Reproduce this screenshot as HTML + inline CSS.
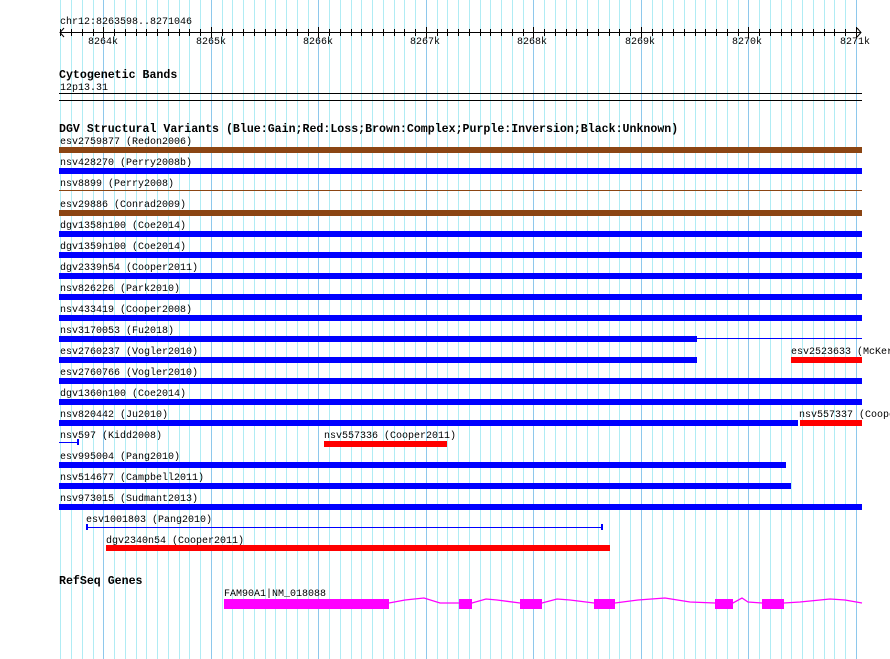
<!DOCTYPE html>
<html><head><meta charset="utf-8"><style>
html,body{margin:0;padding:0;background:#fff;}
svg{display:block;}
text{font-family:"Liberation Mono","DejaVu Sans Mono",monospace;font-size:10px;fill:#000;}
.b{font-weight:bold;font-size:11.6px;}
</style></head><body>
<svg width="890" height="659" xmlns="http://www.w3.org/2000/svg">
<g shape-rendering="crispEdges" fill="none">
<path stroke="#b0ecf4" d="M60.5 0V659M71.5 0V659M82.5 0V659M93.5 0V659M114.5 0V659M125.5 0V659M136.5 0V659M146.5 0V659M157.5 0V659M168.5 0V659M179.5 0V659M189.5 0V659M200.5 0V659M222.5 0V659M232.5 0V659M243.5 0V659M254.5 0V659M265.5 0V659M275.5 0V659M286.5 0V659M297.5 0V659M308.5 0V659M329.5 0V659M340.5 0V659M351.5 0V659M361.5 0V659M372.5 0V659M383.5 0V659M394.5 0V659M404.5 0V659M415.5 0V659M437.5 0V659M447.5 0V659M458.5 0V659M469.5 0V659M480.5 0V659M490.5 0V659M501.5 0V659M512.5 0V659M523.5 0V659M544.5 0V659M555.5 0V659M566.5 0V659M576.5 0V659M587.5 0V659M598.5 0V659M609.5 0V659M619.5 0V659M630.5 0V659M652.5 0V659M662.5 0V659M673.5 0V659M684.5 0V659M695.5 0V659M705.5 0V659M716.5 0V659M727.5 0V659M738.5 0V659M759.5 0V659M770.5 0V659M781.5 0V659M791.5 0V659M802.5 0V659M813.5 0V659M824.5 0V659M834.5 0V659M845.5 0V659"/>
<path stroke="#8ec8ec" d="M103.5 0V659M211.5 0V659M318.5 0V659M426.5 0V659M533.5 0V659M641.5 0V659M748.5 0V659M856.5 0V659"/>
<path stroke="#000" d="M60.5 29V36M71.5 29V36M82.5 29V36M93.5 29V36M114.5 29V36M125.5 29V36M136.5 29V36M146.5 29V36M157.5 29V36M168.5 29V36M179.5 29V36M189.5 29V36M200.5 29V36M222.5 29V36M232.5 29V36M243.5 29V36M254.5 29V36M265.5 29V36M275.5 29V36M286.5 29V36M297.5 29V36M308.5 29V36M329.5 29V36M340.5 29V36M351.5 29V36M361.5 29V36M372.5 29V36M383.5 29V36M394.5 29V36M404.5 29V36M415.5 29V36M437.5 29V36M447.5 29V36M458.5 29V36M469.5 29V36M480.5 29V36M490.5 29V36M501.5 29V36M512.5 29V36M523.5 29V36M544.5 29V36M555.5 29V36M566.5 29V36M576.5 29V36M587.5 29V36M598.5 29V36M609.5 29V36M619.5 29V36M630.5 29V36M652.5 29V36M662.5 29V36M673.5 29V36M684.5 29V36M695.5 29V36M705.5 29V36M716.5 29V36M727.5 29V36M738.5 29V36M759.5 29V36M770.5 29V36M781.5 29V36M791.5 29V36M802.5 29V36M813.5 29V36M824.5 29V36M834.5 29V36M845.5 29V36M103.5 27V38M211.5 27V38M318.5 27V38M426.5 27V38M533.5 27V38M641.5 27V38M748.5 27V38M856.5 27V38"/>
<line x1="60" y1="32.5" x2="861" y2="32.5" stroke="#000"/>
<line x1="59" y1="93.5" x2="862" y2="93.5" stroke="#000"/>
<line x1="59" y1="100.5" x2="862" y2="100.5" stroke="#000"/>
</g>
<polyline points="64,28 60,32.5 64,37" fill="none" stroke="#000"/>
<polyline points="857,28 861,32.5 857,37" fill="none" stroke="#000"/>
<text x="60" y="24">chr12:8263598..8271046</text>
<text x="88" y="44">8264k</text><text x="196" y="44">8265k</text><text x="303" y="44">8266k</text>
<text x="410" y="44">8267k</text><text x="517" y="44">8268k</text><text x="625" y="44">8269k</text>
<text x="732" y="44">8270k</text><text x="840" y="44">8271k</text>
<text class="b" x="59" y="78">Cytogenetic Bands</text>
<text x="60" y="90">12p13.31</text>
<text class="b" x="59" y="132">DGV Structural Variants (Blue:Gain;Red:Loss;Brown:Complex;Purple:Inversion;Black:Unknown)</text>
<g shape-rendering="crispEdges">
<rect x="59" y="147" width="803" height="6" fill="#8b4513"/>
<rect x="59" y="168" width="803" height="6" fill="#0000ff"/>
<rect x="59" y="190" width="803" height="1" fill="#8b4513"/>
<rect x="59" y="210" width="803" height="6" fill="#8b4513"/>
<rect x="59" y="231" width="803" height="6" fill="#0000ff"/>
<rect x="59" y="252" width="803" height="6" fill="#0000ff"/>
<rect x="59" y="273" width="803" height="6" fill="#0000ff"/>
<rect x="59" y="294" width="803" height="6" fill="#0000ff"/>
<rect x="59" y="315" width="803" height="6" fill="#0000ff"/>
<rect x="59" y="336" width="638" height="6" fill="#0000ff"/>
<rect x="697" y="338" width="165" height="1" fill="#0000ff"/>
<rect x="59" y="357" width="638" height="6" fill="#0000ff"/>
<rect x="791" y="357" width="71" height="6" fill="#ff0000"/>
<rect x="59" y="378" width="803" height="6" fill="#0000ff"/>
<rect x="59" y="399" width="803" height="6" fill="#0000ff"/>
<rect x="59" y="420" width="739" height="6" fill="#0000ff"/>
<rect x="800" y="420" width="62" height="6" fill="#ff0000"/>
<rect x="59" y="442" width="19" height="1" fill="#0000ff"/>
<rect x="77" y="439" width="2" height="6" fill="#0000ff"/>
<rect x="324" y="441" width="123" height="6" fill="#ff0000"/>
<rect x="59" y="462" width="727" height="6" fill="#0000ff"/>
<rect x="59" y="483" width="732" height="6" fill="#0000ff"/>
<rect x="59" y="504" width="803" height="6" fill="#0000ff"/>
<rect x="87" y="527" width="515" height="1" fill="#0000ff"/>
<rect x="86" y="524" width="2" height="6" fill="#0000ff"/>
<rect x="601" y="524" width="2" height="6" fill="#0000ff"/>
<rect x="106" y="545" width="504" height="6" fill="#ff0000"/>
</g>
<text x="60" y="144">esv2759877 (Redon2006)</text>
<text x="60" y="165">nsv428270 (Perry2008b)</text>
<text x="60" y="186">nsv8899 (Perry2008)</text>
<text x="60" y="207">esv29886 (Conrad2009)</text>
<text x="60" y="228">dgv1358n100 (Coe2014)</text>
<text x="60" y="249">dgv1359n100 (Coe2014)</text>
<text x="60" y="270">dgv2339n54 (Cooper2011)</text>
<text x="60" y="291">nsv826226 (Park2010)</text>
<text x="60" y="312">nsv433419 (Cooper2008)</text>
<text x="60" y="333">nsv3170053 (Fu2018)</text>
<text x="60" y="354">esv2760237 (Vogler2010)</text>
<text x="791" y="354">esv2523633 (McKernan2009)</text>
<text x="60" y="375">esv2760766 (Vogler2010)</text>
<text x="60" y="396">dgv1360n100 (Coe2014)</text>
<text x="60" y="417">nsv820442 (Ju2010)</text>
<text x="799" y="417">nsv557337 (Cooper2011)</text>
<text x="60" y="438">nsv597 (Kidd2008)</text>
<text x="324" y="438">nsv557336 (Cooper2011)</text>
<text x="60" y="459">esv995004 (Pang2010)</text>
<text x="60" y="480">nsv514677 (Campbell2011)</text>
<text x="60" y="501">nsv973015 (Sudmant2013)</text>
<text x="86" y="522">esv1001803 (Pang2010)</text>
<text x="106" y="543">dgv2340n54 (Cooper2011)</text>
<text class="b" x="59" y="584">RefSeq Genes</text>
<text x="224" y="596">FAM90A1|NM_018088</text>
<polyline points="389,603 405,600 424,598 440,603 459,603 472,603 486,599 497,600 520,603 542,603 557,599 570,600 594,603 615,603 638,600 665,598 690,602 715,603 733,603 742,598 748,602 762,603 784,603 800,602 830,599 845,600 862,603" fill="none" stroke="#ff00ff" stroke-width="1.3"/>
<g fill="#ff00ff" shape-rendering="crispEdges">
<rect x="224" y="599" width="165" height="10"/>
<rect x="459" y="599" width="13" height="10"/>
<rect x="520" y="599" width="22" height="10"/>
<rect x="594" y="599" width="21" height="10"/>
<rect x="715" y="599" width="18" height="10"/>
<rect x="762" y="599" width="22" height="10"/>
</g>
</svg>
</body></html>
